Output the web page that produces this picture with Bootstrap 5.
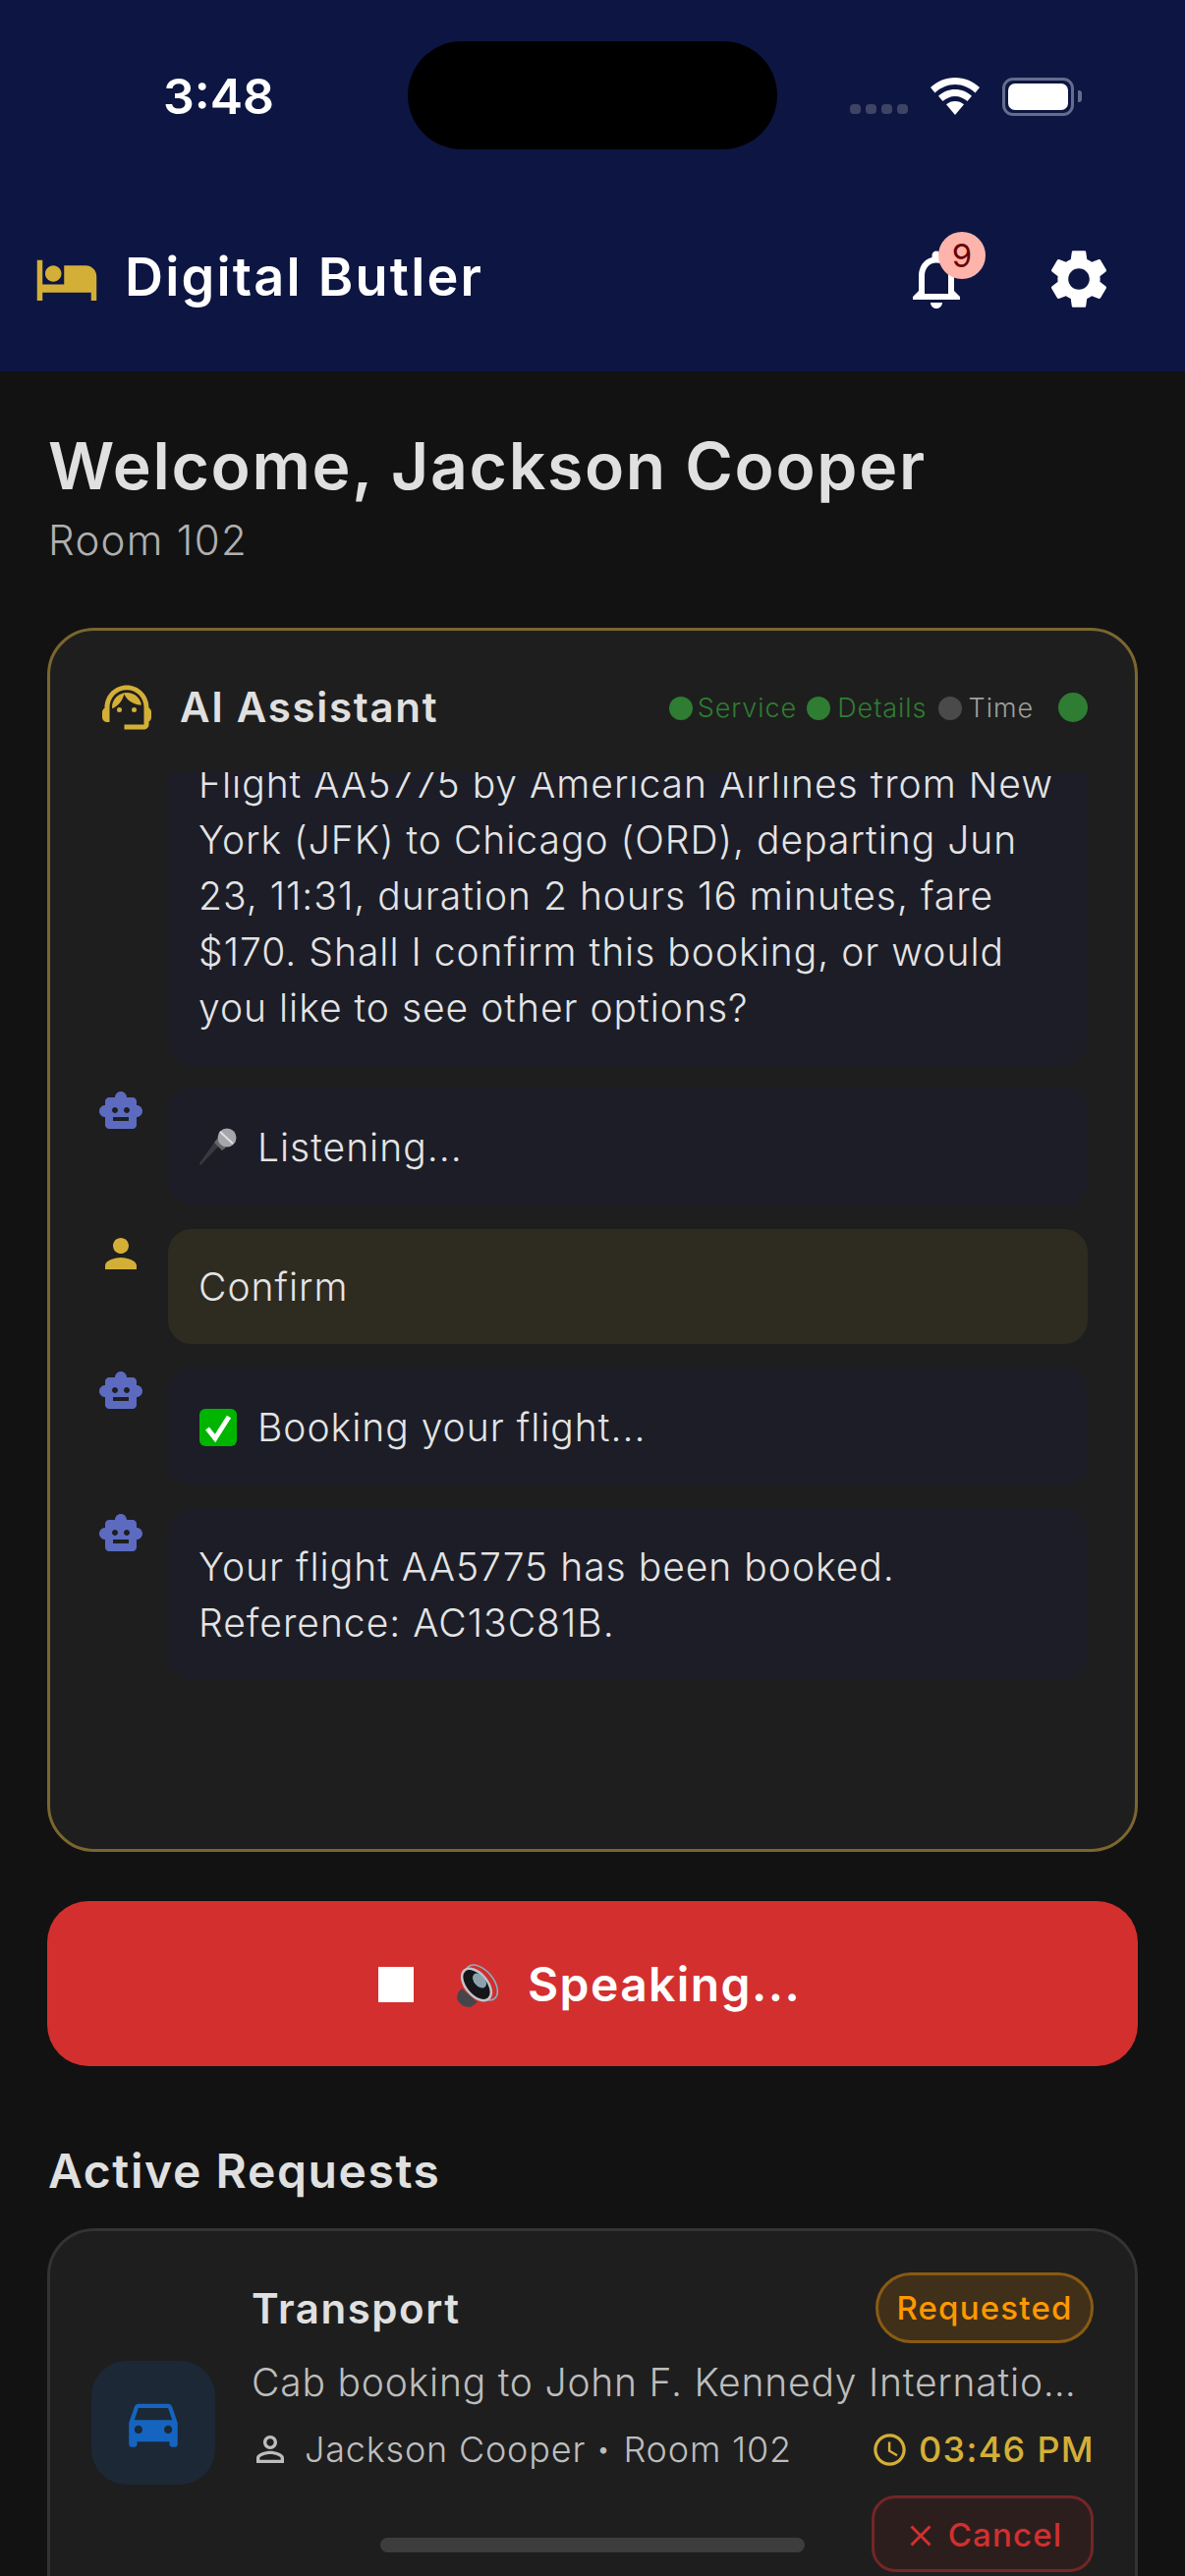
<!DOCTYPE html>
<html lang="en">
<head>
<meta charset="utf-8">
<title>Digital Butler</title>
<link href="https://cdn.jsdelivr.net/npm/bootstrap@5.3.0/dist/css/bootstrap.min.css" rel="stylesheet">
<style>
html,body{width:1206px;height:2622px;overflow:hidden;background:#121212;}
body{font-family:Inter,"Liberation Sans",sans-serif;color:#e0e0e0;position:relative;}
svg{display:block;flex:none;fill:currentColor;}
.app-head{height:378px;background:#0d1642;color:#fff;}
.status-top{padding-top:42px;}
.clock-wrap{width:415px;padding-left:166px;font-size:50px;font-weight:600;line-height:112px;}
.island{width:376px;height:110px;background:#000;border-radius:55px;}
.status-icons{padding-left:74px;gap:23px;height:110px;padding-top:37px;}
.sig-dots{gap:5px;margin-top:27px;}
.sig-dots i{display:block;width:11px;height:10px;border-radius:4px;background:#3d4465;}
.batt{width:73px;height:39px;border:3px solid #666c8c;border-radius:11px;padding:3px;}
.batt i{display:block;width:100%;height:100%;background:#fff;border-radius:7px;}
.batt-nub{width:4px;height:12px;background:#666c8c;border-radius:0 3px 3px 0;margin-top:13px;margin-left:-19px;}
.tool-row{padding:94px 0 0 35px;height:166px;}
.hotel-ic{color:#d4af37;width:66px;height:66px;}
.brand-name{font-size:54px;font-weight:600;letter-spacing:2.2px;margin:-5px 0 0 26px;line-height:72px;}
.bell-box{width:72px;height:72px;margin-left:auto;}
.notif-pill{position:absolute;left:38px;top:-12px;width:48px;height:48px;border-radius:50%;background:#ffb4ab;color:#690005;font-size:33px;line-height:48px;text-align:center;}
.gear-box{width:72px;height:72px;margin-left:73px;margin-right:72px;}
.main-pad{padding:0 48px;}
.hello{font-size:66px;font-weight:600;letter-spacing:1.7px;line-height:80px;margin:56px 0 0 1px;}
.room-line{font-size:42px;font-weight:300;color:#b0b0b0;line-height:50px;margin:11px 0 0 1px;letter-spacing:1.3px;}
.ai-card{margin-top:64px;height:1246px;background:#1e1e1e;border:3px solid #7b662f;border-radius:48px;padding:48px 48px 0;}
.ai-head{height:96px;}
.ai-title{font-size:42px;font-weight:600;letter-spacing:1.7px;margin-left:24px;line-height:60px;}
.ai-steps{height:62px;}
.step-dot{width:24px;height:24px;border-radius:50%;background:#2e7d32;margin-right:7px;}
.step-dot.lead-dot{margin-right:5px;}
.step-dot.off{background:#4a4a4a;}
.step-txt{font-size:27px;font-weight:300;letter-spacing:.95px;color:#2e7d32;margin-right:11px;}
.step-txt.lead-txt{margin-right:10px;}
.step-txt.off{color:#9e9e9e;}
.live-dot{width:30px;height:30px;border-radius:50%;background:#2e7d32;margin-left:14px;margin-top:-2px;}
.chat-clip{height:960px;overflow:hidden;}
.chat-scroll{margin-top:-47px;}
.msg-row{gap:24px;margin-bottom:23.5px;}
.msg-row.first-row{margin-bottom:22px;}
.who{width:48px;height:48px;margin-top:1px;}
.who.bot{color:#5c6bc0;}
.who.me{color:#d4af37;}
.bubble{flex:1;min-width:0;border-radius:24px;padding:30px 32px 30px 31px;font-size:39px;line-height:57px;font-weight:300;letter-spacing:1px;background:#1c1d27;color:#e4e4e4;}
.bubble.with-emoji{padding-top:33px;padding-bottom:31px;}
.bubble.mine{background:#2e2b20;}
.emoji-svg{display:inline-block;vertical-align:-6px;margin-right:20px;width:40px;height:40px;}
.speak-btn{margin-top:50px;height:168px;width:100%;background:#d32f2f;color:#fff;border:0;border-radius:42px;font-size:48px;font-weight:600;letter-spacing:1.4px;padding:2px 24px 0 0;}
.speak-btn:hover{background:#d32f2f;color:#fff;}
.sec-title{font-size:48px;font-weight:600;letter-spacing:1.6px;margin:77px 0 0 1px;line-height:60px;color:#e0e0e0;}
.req-card{margin-top:28px;height:600px;background:#1e1e1e;border:3px solid #333;border-radius:48px;padding:42px;}
.req-inner{gap:37px;}
.req-ic{width:126px;height:126px;border-radius:36px;background:#1c2836;color:#1565c0;margin-top:90px;}
.req-body{flex:1;min-width:0;width:0;}
.req-top{height:72px;}
.req-name{font-size:42px;font-weight:600;letter-spacing:1.55px;}
.req-pill{height:72px;width:222px;margin-left:auto;border:3px solid #8a5a12;background:#40301a;color:#ff9800;border-radius:36px;font-size:33px;font-weight:500;letter-spacing:1.2px;line-height:66px;text-align:center;}
.req-desc{font-size:39px;font-weight:300;color:#bdbdbd;letter-spacing:.8px;line-height:48px;margin-top:16px;white-space:nowrap;overflow:hidden;text-overflow:ellipsis;width:846px;}
.req-meta{height:48px;margin-top:20px;font-size:36px;font-weight:300;color:#bdbdbd;letter-spacing:.8px;}
.req-meta .sep{margin:0 13px 0 11px;font-size:24px;}
.req-time{margin:0 -1px 0 auto;color:#d4af37;font-weight:500;letter-spacing:1.3px;}
.req-cancel{width:226px;height:78px;margin:23px 0 0 auto;border:3px solid #732626;background:#2d1e1e;color:#d32f2f;border-radius:24px;font-size:33px;font-weight:500;letter-spacing:1.2px;padding:3px 0 0;}
.req-cancel:hover{background:#2d1e1e;color:#d32f2f;border-color:#732626;}
.home-bar{position:absolute;left:387px;top:2583px;width:432px;height:15px;border-radius:8px;background:#3d3d3d;}
</style>
</head>
<body>
<header class="app-head">
  <div class="status-top d-flex">
    <div class="clock-wrap">3:48</div>
    <div class="island"></div>
    <div class="status-icons d-flex align-items-start">
      <div class="sig-dots d-flex"><i></i><i></i><i></i><i></i></div>
      <svg width="50" height="38" viewBox="0 0 50 38"><path d="M25 0C15.500 0 7 3.600 0 10l4.500 5.500C10.500 10 17.500 7 25 7s14.500 3 20.500 8.500L50 10C43 3.600 34.500 0 25 0z"/><path d="M25 12c-6.500 0-12.500 2.500-17 6.800l4.500 5.200c3.500-3 7.800-5 12.500-5s9 2 12.500 5l4.500-5.200C37.500 14.500 31.500 12 25 12z"/><path d="M25 24c-3.500 0-6.500 1.200-9 3.300L25 38l9-10.700C31.500 25.200 28.500 24 25 24z"/></svg>
      <div class="batt"><i></i></div>
      <div class="batt-nub"></div>
    </div>
  </div>
  <nav class="tool-row d-flex align-items-center">
    <svg class="hotel-ic" viewBox="0 0 24 24"><path d="M7 13c1.660 0 3-1.340 3-3S8.660 7 7 7s-3 1.340-3 3 1.340 3 3 3zm12-6h-8v7H3V5H1v15h2v-3h18v3h2v-9c0-2.210-1.790-4-4-4z"/></svg>
    <span class="brand-name">Digital Butler</span>
    <div class="bell-box position-relative">
      <svg width="72" height="72" viewBox="0 0 24 24"><path d="M12 22c1.100 0 2-.9 2-2h-4c0 1.100.9 2 2 2zm6-6v-5c0-3.070-1.630-5.640-4.500-6.320V4c0-.83-.67-1.500-1.500-1.500s-1.500.67-1.500 1.500v.68C7.640 5.360 6 7.920 6 11v5l-2 2v1h16v-1l-2-2zm-2 1H8v-6c0-2.480 1.510-4.500 4-4.500s4 2.020 4 4.500v6z"/></svg>
      <span class="notif-pill">9</span>
    </div>
    <div class="gear-box">
      <svg width="72" height="72" viewBox="0 0 24 24"><path d="M19.140 12.940c.04-.3.06-.61.06-.94 0-.32-.02-.64-.07-.94l2.030-1.580c.18-.14.23-.41.12-.61l-1.920-3.320c-.12-.22-.37-.29-.59-.22l-2.390.96c-.5-.38-1.030-.7-1.620-.94l-.36-2.540c-.04-.24-.24-.41-.48-.41h-3.840c-.24 0-.43.17-.47.41l-.36 2.540c-.59.24-1.130.57-1.620.94l-2.390-.96c-.22-.08-.47 0-.59.22L2.740 8.870c-.12.21-.08.47.12.61l2.030 1.580c-.05.3-.09.63-.09.94s.02.64.07.94l-2.030 1.580c-.18.14-.23.41-.12.61l1.920 3.320c.12.22.37.29.59.22l2.390-.96c.5.38 1.030.7 1.620.94l.36 2.540c.05.24.24.41.48.41h3.840c.24 0 .44-.17.47-.41l.36-2.540c.59-.24 1.130-.56 1.620-.94l2.390.96c.22.08.47 0 .59-.22l1.920-3.320c.12-.22.07-.47-.12-.61l-2.010-1.580zM12 15.600c-1.980 0-3.600-1.620-3.600-3.600s1.620-3.600 3.600-3.600 3.600 1.620 3.600 3.600-1.620 3.600-3.600 3.600z"/></svg>
    </div>
  </nav>
</header>
<main class="main-pad">
  <h1 class="hello">Welcome, Jackson Cooper</h1>
  <p class="room-line">Room 102</p>

  <section class="ai-card">
    <div class="ai-head d-flex align-items-start">
      <svg width="60" height="60" viewBox="0 0 24 24" style="color:#d4af37"><path d="M21 12.220C21 6.730 16.740 3 12 3c-4.690 0-9 3.650-9 9.280-.6.34-1 .98-1 1.720v2c0 1.100.9 2 2 2h1v-6.100c0-3.870 3.130-7 7-7s7 3.130 7 7V19h-8v2h8c1.100 0 2-.9 2-2v-1.220c.59-.31 1-.92 1-1.640v-2.300c0-.7-.41-1.310-1-1.620z"/><circle cx="9" cy="13" r="1"/><circle cx="15" cy="13" r="1"/><path d="M18 11.030C17.520 8.180 15.040 6 12.050 6c-3.030 0-6.290 2.510-6.030 6.450 2.470-1.010 4.330-3.210 4.860-5.890 1.310 2.630 4 4.440 7.120 4.470z"/></svg>
      <span class="ai-title">AI Assistant</span>
      <div class="ai-steps ms-auto d-flex align-items-center">
        <span class="step-dot lead-dot"></span><span class="step-txt lead-txt">Service</span>
        <span class="step-dot"></span><span class="step-txt">Details</span>
        <span class="step-dot off"></span><span class="step-txt off">Time</span>
        <span class="live-dot"></span>
      </div>
    </div>
    <div class="chat-clip">
      <div class="chat-scroll">
        <div class="msg-row first-row d-flex align-items-start">
          <span class="who"></span>
          <div class="bubble">Flight AA5775 by American Airlines from New York (JFK) to Chicago (ORD), departing Jun 23, 11:31, duration 2 hours 16 minutes, fare $170. Shall I confirm this booking, or would you like to see other options?</div>
        </div>
        <div class="msg-row d-flex align-items-start">
          <svg class="who bot" viewBox="0 0 24 24"><path d="M20 9V7c0-1.100-.9-2-2-2h-3c0-1.660-1.340-3-3-3S9 3.340 9 5H6c-1.100 0-2 .9-2 2v2c-1.660 0-3 1.340-3 3s1.340 3 3 3v4c0 1.100.9 2 2 2h12c1.100 0 2-.9 2-2v-4c1.660 0 3-1.340 3-3s-1.340-3-3-3zM7.500 11.500c0-.83.67-1.500 1.500-1.500s1.500.67 1.500 1.500S9.830 13 9 13s-1.500-.67-1.500-1.500zM16 17H8v-2h8v2zm-1-4c-.83 0-1.500-.67-1.500-1.500S14.170 10 15 10s1.500.67 1.500 1.500S15.830 13 15 13z"/></svg>
          <div class="bubble with-emoji"><svg class="emoji-svg" viewBox="0 0 40 40"><path d="M24 15 L4 36 L2 38 L1 36 L19 11z" fill="#3a3a3e"/><path d="M19 11 L28 20 L24 23 L16 15z" fill="#666"/><circle cx="29" cy="10" r="9.500" fill="#a6a6aa"/><path d="M22 4 L35 16" stroke="#e0e0e0" stroke-width="2" fill="none"/></svg>Listening...</div>
        </div>
        <div class="msg-row d-flex align-items-start">
          <svg class="who me" viewBox="0 0 24 24"><path d="M12 12c2.210 0 4-1.790 4-4s-1.790-4-4-4-4 1.790-4 4 1.790 4 4 4zm0 2c-2.670 0-8 1.340-8 4v2h16v-2c0-2.660-5.330-4-8-4z"/></svg>
          <div class="bubble mine">Confirm</div>
        </div>
        <div class="msg-row d-flex align-items-start">
          <svg class="who bot" viewBox="0 0 24 24"><path d="M20 9V7c0-1.100-.9-2-2-2h-3c0-1.660-1.340-3-3-3S9 3.340 9 5H6c-1.100 0-2 .9-2 2v2c-1.660 0-3 1.340-3 3s1.340 3 3 3v4c0 1.100.9 2 2 2h12c1.100 0 2-.9 2-2v-4c1.660 0 3-1.340 3-3s-1.340-3-3-3zM7.500 11.500c0-.83.67-1.500 1.500-1.500s1.500.67 1.500 1.500S9.830 13 9 13s-1.500-.67-1.500-1.500zM16 17H8v-2h8v2zm-1-4c-.83 0-1.500-.67-1.500-1.500S14.170 10 15 10s1.500.67 1.500 1.500S15.830 13 15 13z"/></svg>
          <div class="bubble with-emoji"><svg class="emoji-svg" viewBox="0 0 40 40"><rect x="1" y="1" width="38" height="38" rx="6" fill="#00b400"/><path d="M9 21l8 10L31 9" stroke="#fff" stroke-width="5" fill="none"/></svg>Booking your flight...</div>
        </div>
        <div class="msg-row d-flex align-items-start">
          <svg class="who bot" viewBox="0 0 24 24"><path d="M20 9V7c0-1.100-.9-2-2-2h-3c0-1.660-1.340-3-3-3S9 3.340 9 5H6c-1.100 0-2 .9-2 2v2c-1.660 0-3 1.340-3 3s1.340 3 3 3v4c0 1.100.9 2 2 2h12c1.100 0 2-.9 2-2v-4c1.660 0 3-1.340 3-3s-1.340-3-3-3zM7.500 11.500c0-.83.67-1.500 1.500-1.500s1.500.67 1.500 1.500S9.830 13 9 13s-1.500-.67-1.500-1.500zM16 17H8v-2h8v2zm-1-4c-.83 0-1.500-.67-1.500-1.500S14.170 10 15 10s1.500.67 1.500 1.500S15.830 13 15 13z"/></svg>
          <div class="bubble">Your flight AA5775 has been booked. Reference: AC13C81B.</div>
        </div>
      </div>
    </div>
  </section>

  <button type="button" class="btn speak-btn d-flex align-items-center justify-content-center">
    <svg width="72" height="72" viewBox="0 0 24 24"><path d="M6 6h12v12H6z"/></svg>
    <svg width="48" height="48" viewBox="0 0 48 48" style="margin:0 25px"><path d="M6 28 L22 42 L15 47 Q4 47 1 38 Q1 32 6 28z" fill="#46464a"/><ellipse cx="26" cy="22" rx="12" ry="21" transform="rotate(-40 26 22)" fill="none" stroke="#7fb8c4" stroke-width="1.500"/><ellipse cx="21" cy="24" rx="11" ry="19" transform="rotate(-40 21 24)" fill="#16161a" stroke="#c4c4c8" stroke-width="2.500"/><ellipse cx="24" cy="20" rx="5" ry="8" transform="rotate(-40 24 20)" fill="#8fa0aa" stroke="#7fb8c4"/></svg>
    <span>Speaking...</span>
  </button>

  <h2 class="sec-title">Active Requests</h2>

  <article class="req-card">
    <div class="req-inner d-flex align-items-start">
      <div class="req-ic d-flex align-items-center justify-content-center flex-shrink-0">
        <svg width="66" height="66" viewBox="0 0 24 24"><path d="M18.920 6.010C18.720 5.420 18.160 5 17.500 5h-11c-.66 0-1.210.42-1.420 1.010L3 12v8c0 .55.45 1 1 1h1c.55 0 1-.45 1-1v-1h12v1c0 .55.45 1 1 1h1c.55 0 1-.45 1-1v-8l-2.080-5.990zM6.500 16c-.83 0-1.500-.67-1.500-1.500S5.670 13 6.500 13s1.500.67 1.500 1.500S7.330 16 6.500 16zm11 0c-.83 0-1.500-.67-1.500-1.500s.67-1.500 1.500-1.500 1.500.67 1.500 1.500-.67 1.500-1.500 1.500zM5 11l1.500-4.500h11L19 11H5z"/></svg>
      </div>
      <div class="req-body">
        <div class="req-top d-flex align-items-center">
          <span class="req-name">Transport</span>
          <span class="req-pill">Requested</span>
        </div>
        <div class="req-desc">Cab booking to John F. Kennedy International Airport</div>
        <div class="req-meta d-flex align-items-center">
          <svg width="42" height="42" viewBox="0 0 24 24" style="margin:0 14px 0 -2px"><path d="M12 5.900c1.160 0 2.100.94 2.100 2.100s-.94 2.100-2.100 2.100S9.900 9.160 9.900 8s.94-2.100 2.100-2.100m0 9c2.970 0 6.100 1.460 6.100 2.100v1.100H5.900V17c0-.64 3.130-2.100 6.100-2.100M12 4C9.790 4 8 5.790 8 8s1.790 4 4 4 4-1.790 4-4-1.790-4-4-4zm0 9c-2.670 0-8 1.340-8 4v3h16v-3c0-2.660-5.330-4-8-4z"/></svg>
          <span>Jackson Cooper</span><span class="sep">•</span><span>Room 102</span>
          <span class="req-time d-flex align-items-center"><svg width="39" height="39" viewBox="0 0 24 24" style="margin-right:10px"><path d="M11.990 2C6.470 2 2 6.480 2 12s4.470 10 9.990 10C17.520 22 22 17.520 22 12S17.520 2 11.990 2zM12 20c-4.420 0-8-3.580-8-8s3.580-8 8-8 8 3.580 8 8-3.580 8-8 8zm.5-13H11v6l5.250 3.150.75-1.230-4.500-2.670z"/></svg>03:46 PM</span>
        </div>
        <button type="button" class="btn req-cancel d-flex align-items-center justify-content-center"><svg width="36" height="36" viewBox="0 0 24 24" style="margin-right:10px"><path d="M19 6.410L17.590 5 12 10.590 6.410 5 5 6.410 10.590 12 5 17.590 6.410 19 12 13.410 17.590 19 19 17.590 13.410 12z"/></svg>Cancel</button>
      </div>
    </div>
  </article>
</main>
<div class="home-bar"></div>
</body>
</html>
